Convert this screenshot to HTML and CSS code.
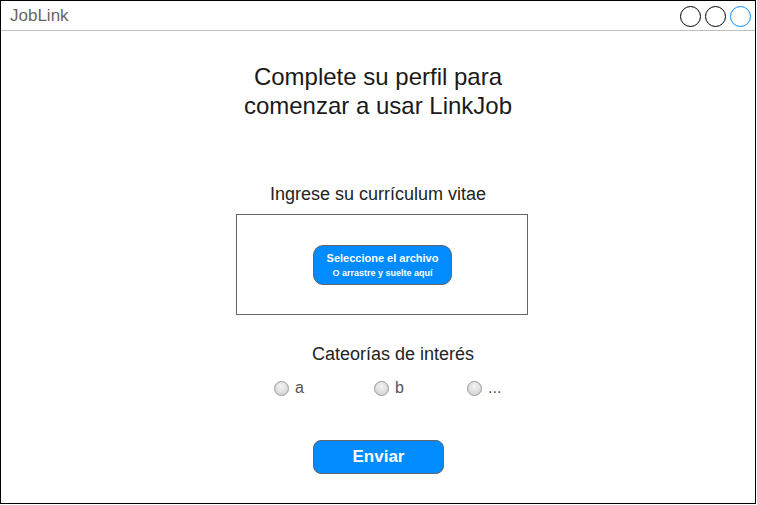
FILE: index.html
```html
<!DOCTYPE html>
<html lang="es">
<head>
<meta charset="utf-8">
<title>JobLink</title>
<link rel="stylesheet" href="styles.css">
</head>
<body>
<div class="frame">
  <header class="titlebar">
    <span class="app-name">JobLink</span>
    <div class="win-controls">
      <span class="dot"></span>
      <span class="dot"></span>
      <span class="dot dot-blue"></span>
    </div>
  </header>
  <main class="content">
    <h1 class="title">Complete su perfil para<br>comenzar a usar LinkJob</h1>
    <p class="label cv-label">Ingrese su currículum vitae</p>
    <div class="dropzone">
      <button class="file-btn" type="button">
        <span class="file-main">Seleccione el archivo</span>
        <span class="file-sub">O arrastre y suelte aquí</span>
      </button>
    </div>
    <p class="label cat-label">Cateorías de interés</p>
    <div class="radios">
      <label class="radio radio-a"><span class="circle"></span><span class="rtext">a</span></label>
      <label class="radio radio-b"><span class="circle"></span><span class="rtext">b</span></label>
      <label class="radio"><span class="circle"></span><span class="rtext">...</span></label>
    </div>
    <button class="send-btn" type="button">Enviar</button>
  </main>
</div>
</body>
</html>
```

FILE: styles.css
```css
* { box-sizing: border-box; }
html, body { margin: 0; padding: 0; background: #fff; }
body { font-family: "Liberation Sans", Arial, sans-serif; }

.frame {
  width: 756px;
  height: 504px;
  border: 1px solid #000;
  display: flex;
  flex-direction: column;
}

.titlebar {
  height: 30px;
  border-bottom: 1px solid #c0c0c0;
  display: flex;
  align-items: center;
  justify-content: space-between;
  padding: 0 4px 0 9px;
}
.app-name { font-size: 17px; color: #666; padding-top: 1px; }
.win-controls { display: flex; gap: 4px; padding-top: 1px; }
.dot {
  width: 21px; height: 21px;
  border: 1.3px solid #000;
  border-radius: 50%;
}
.dot-blue { border-color: #0a8cff; }

.content {
  display: flex;
  flex-direction: column;
  align-items: center;
  padding-top: 31px;
}

.title {
  margin: 0;
  font-size: 24px;
  font-weight: normal;
  line-height: 29px;
  color: #1a1a1a;
  text-align: center;
}

.label {
  margin: 0;
  font-size: 18px;
  line-height: 20px;
  color: #222;
}
.cv-label { margin-top: 64px; }
.cat-label { margin-top: 29px; margin-left: 30px; }

.dropzone {
  margin-top: 10px;
  margin-left: 8px;
  width: 292px;
  height: 101px;
  border: 1px solid #666;
  display: flex;
  align-items: center;
  justify-content: center;
  padding-left: 1px;
}

.file-btn {
  width: 139px;
  height: 40px;
  background: #008cff;
  border: 1px solid #666;
  border-radius: 10px;
  color: #fff;
  font-family: "Liberation Sans", Arial, sans-serif;
  font-weight: bold;
  display: flex;
  flex-direction: column;
  align-items: center;
  justify-content: center;
  padding: 0;
  gap: 4px;
}
.file-main { font-size: 11px; line-height: 12px; }
.file-sub { font-size: 9px; line-height: 10px; }

.radios {
  align-self: flex-start;
  margin-left: 273px;
  margin-top: 14px;
  height: 20px;
  display: grid;
  grid-template-columns: 100px 93px auto;
  align-items: center;
}
.radio { display: flex; align-items: center; gap: 6px; }
.circle {
  width: 15px; height: 15px;
  border-radius: 50%;
  border: 1px solid #999;
  background: radial-gradient(circle at 50% 35%, #f4f4f4 0%, #dcdcdc 60%, #c8c8c8 100%);
}
.rtext { font-size: 16px; color: #555; line-height: 20px; }

.send-btn {
  margin-top: 42px;
  width: 131px;
  height: 34px;
  background: #008cff;
  border: 1px solid #666;
  border-radius: 8px;
  color: #fff;
  font-family: "Liberation Sans", Arial, sans-serif;
  font-weight: bold;
  font-size: 17px;
  padding: 0;
  margin-left: 1px;
}
```
